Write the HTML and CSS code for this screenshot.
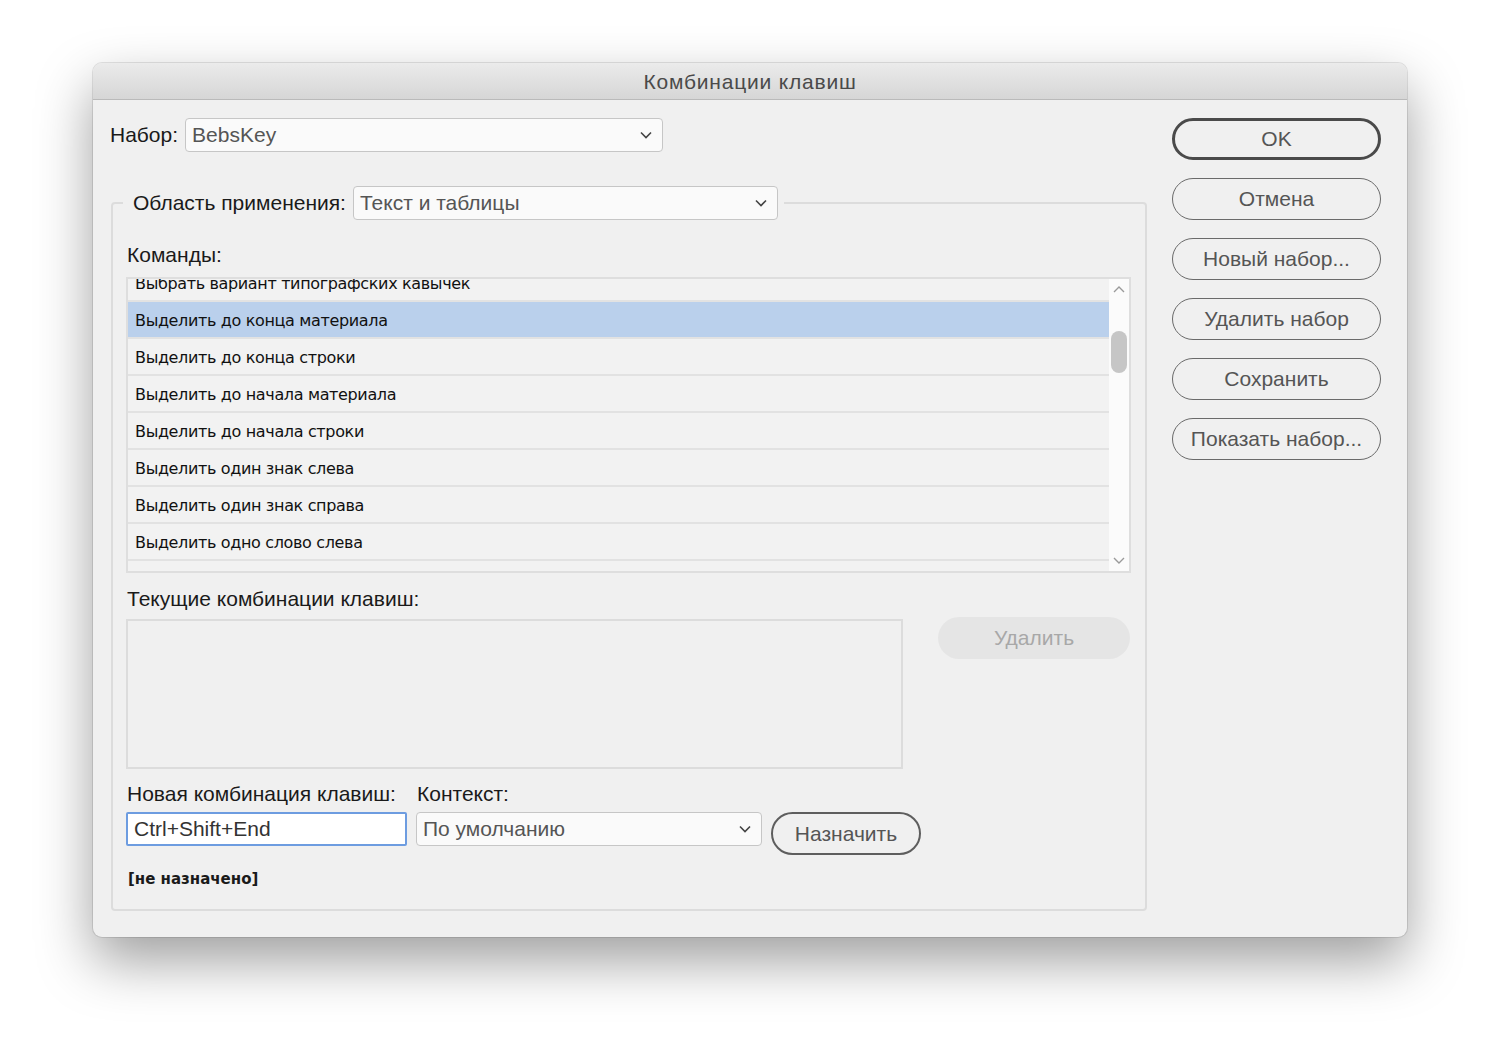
FILE: index.html
```html
<!DOCTYPE html>
<html lang="ru">
<head>
<meta charset="utf-8">
<title>Комбинации клавиш</title>
<link rel="stylesheet" href="styles.css">
</head>
<body>
<div class="window">
  <div class="titlebar">Комбинации клавиш</div>
  <div class="content">
    <div class="left">
      <div class="set-row">
        <span class="label">Набор:</span>
        <div class="select set-select"><span>BebsKey</span><svg class="chev" width="12" height="8" viewBox="0 0 12 8"><polyline points="1,1.5 6,6.5 11,1.5" fill="none" stroke="#444" stroke-width="1.6"/></svg></div>
      </div>
      <fieldset class="area">
        <legend class="area-legend">
          <span class="label">Область применения:</span>
          <div class="select area-select"><span>Текст и таблицы</span><svg class="chev" width="12" height="8" viewBox="0 0 12 8"><polyline points="1,1.5 6,6.5 11,1.5" fill="none" stroke="#444" stroke-width="1.6"/></svg></div>
        </legend>
        <div class="section-label commands-label">Команды:</div>
        <div class="list">
          <div class="rows">
            <div class="row first">Выбрать вариант типографских кавычек</div>
            <div class="row selected">Выделить до конца материала</div>
            <div class="row">Выделить до конца строки</div>
            <div class="row">Выделить до начала материала</div>
            <div class="row">Выделить до начала строки</div>
            <div class="row">Выделить один знак слева</div>
            <div class="row">Выделить один знак справа</div>
            <div class="row">Выделить одно слово слева</div>
            <div class="row">Выделить одно слово справа</div>
          </div>
          <div class="scrollbar">
            <div class="sb-arrow"><svg width="12" height="7" viewBox="0 0 12 7"><polyline points="1,6 6,1 11,6" fill="none" stroke="#9a9a9a" stroke-width="1.4"/></svg></div>
            <div class="thumb"></div>
            <div class="sb-spacer"></div>
            <div class="sb-arrow down"><svg width="12" height="7" viewBox="0 0 12 7"><polyline points="1,1 6,6 11,1" fill="none" stroke="#9a9a9a" stroke-width="1.4"/></svg></div>
          </div>
        </div>
        <div class="section-label current-label">Текущие комбинации клавиш:</div>
        <div class="current-row">
          <div class="current-box"></div>
          <div class="btn-disabled">Удалить</div>
        </div>
        <div class="new-grid">
          <div class="section-label">Новая комбинация клавиш:</div>
          <div class="section-label">Контекст:</div>
          <div></div>
          <div class="input">Ctrl+Shift+End</div>
          <div class="select ctx-select"><span>По умолчанию</span><svg class="chev" width="12" height="8" viewBox="0 0 12 8"><polyline points="1,1.5 6,6.5 11,1.5" fill="none" stroke="#444" stroke-width="1.6"/></svg></div>
          <div class="btn assign">Назначить</div>
        </div>
        <div class="status">[не назначено]</div>
      </fieldset>
    </div>
    <div class="right">
      <div class="btn side default">OK</div>
      <div class="btn side">Отмена</div>
      <div class="btn side">Новый набор...</div>
      <div class="btn side">Удалить набор</div>
      <div class="btn side">Сохранить</div>
      <div class="btn side">Показать набор...</div>
    </div>
  </div>
</div>
</body>
</html>
```

FILE: styles.css
```css
html, body {
  margin: 0;
  padding: 0;
  background: #ffffff;
}
body {
  font-family: "Liberation Sans", Arial, sans-serif;
  color: #1a1a1a;
  padding-top: 63px;
  height: 998px;
  overflow: hidden;
}
.window {
  width: 1314px;
  height: 874px;
  margin-left: 93px;
  background: #f0f0f0;
  border-radius: 9px;
  box-shadow: 0 24px 55px rgba(0,0,0,0.38), 0 0 0 1px rgba(0,0,0,0.10);
  overflow: hidden;
  box-sizing: border-box;
}
.titlebar {
  height: 36px;
  border-bottom: 1px solid #bababa;
  background: linear-gradient(#ebebeb, #d6d6d6);
  text-align: center;
  line-height: 38px;
  font-size: 21px;
  color: #4a4a4a;
  letter-spacing: 0.8px;
}
.content {
  display: flex;
  padding: 18px 26px 0 17px;
}
.left {
  width: 1037px;
}
.right {
  width: 209px;
  margin-left: 25px;
  display: flex;
  flex-direction: column;
  gap: 18px;
}
.label {
  font-size: 21px;
  line-height: 24px;
  white-space: nowrap;
}
.set-row {
  display: flex;
  align-items: center;
  height: 34px;
}
.select {
  box-sizing: border-box;
  height: 34px;
  border: 1.5px solid #c6c6c6;
  border-radius: 4px;
  background: #fafafa;
  display: flex;
  align-items: center;
  justify-content: space-between;
  padding: 0 10px 0 6px;
  font-size: 21px;
  color: #555;
}
.set-select {
  width: 478px;
  margin-left: 7px;
}
.area {
  margin: 34px 0 0 1px;
  width: 1036px;
  box-sizing: border-box;
  border: 2px solid #dcdcdc;
  border-radius: 4px;
  padding: 0 14px 21px 13px;
  min-inline-size: 0;
}
.area-legend {
  display: flex;
  align-items: center;
  margin-left: -3px;
  padding: 0 6px 0 10px;
}
.area-select {
  width: 425px;
  margin-left: 7px;
}
.section-label {
  font-size: 21px;
  line-height: 24px;
  white-space: nowrap;
  padding-left: 1px;
}
.commands-label {
  margin-top: 23px;
}
.list {
  margin-top: 10px;
  width: 1005px;
  height: 296px;
  box-sizing: border-box;
  border: 2px solid #dedede;
  display: flex;
  background: #f2f2f2;
}
.rows {
  flex: 1;
  overflow: hidden;
}
.row {
  height: 35px;
  border-bottom: 2px solid #e2e2e2;
  font-family: "DejaVu Sans", Verdana, sans-serif;
  font-size: 16px;
  letter-spacing: -0.35px;
  line-height: 37px;
  padding-left: 7px;
  color: #111;
  white-space: nowrap;
  background: #f2f2f2;
}
.row.first {
  margin-top: -14px;
}
.row.selected {
  background: #bad0ec;
}
.scrollbar {
  width: 20px;
  background: #fbfbfb;
  display: flex;
  flex-direction: column;
  align-items: center;
}
.sb-arrow {
  height: 20px;
  display: flex;
  align-items: center;
  justify-content: center;
}
.sb-arrow.down {
  height: 22px;
}
.thumb {
  margin-top: 32px;
  width: 16px;
  height: 42px;
  border-radius: 8px;
  background: #c6c6c6;
}
.sb-spacer {
  flex: 1;
}
.current-label {
  margin-top: 14px;
}
.current-row {
  display: flex;
  align-items: flex-start;
  margin-top: 8px;
}
.current-box {
  width: 777px;
  height: 150px;
  box-sizing: border-box;
  border: 2px solid #dcdcdc;
  background: #f0f0f0;
}
.btn-disabled {
  margin-left: 35px;
  margin-top: -2px;
  width: 192px;
  height: 42px;
  border-radius: 21px;
  background: #e5e5e5;
  color: #a8a8a8;
  font-size: 21px;
  display: flex;
  align-items: center;
  justify-content: center;
}
.new-grid {
  display: grid;
  grid-template-columns: 281px 346px 150px;
  column-gap: 9px;
  row-gap: 6px;
  margin-top: 13px;
  align-items: start;
}
.input {
  box-sizing: border-box;
  height: 34px;
  border: 2px solid #6d9ce0;
  border-radius: 2px;
  background: #ffffff;
  font-size: 21px;
  line-height: 30px;
  padding-left: 6px;
  color: #333;
}
.btn {
  box-sizing: border-box;
  display: flex;
  align-items: center;
  justify-content: center;
  font-size: 21px;
  color: #555;
  white-space: nowrap;
}
.assign {
  height: 43px;
  border: 2px solid #5e5e5e;
  border-radius: 22px;
}
.side {
  height: 42px;
  border: 1.5px solid #6a6a6a;
  border-radius: 21px;
}
.side.default {
  border: 3px solid #4a4a4a;
}
.status {
  margin-top: 15px;
  font-family: "DejaVu Sans", Verdana, sans-serif;
  font-weight: bold;
  font-size: 15px;
  line-height: 18px;
  padding-left: 2px;
  color: #1a1a1a;
}
```
